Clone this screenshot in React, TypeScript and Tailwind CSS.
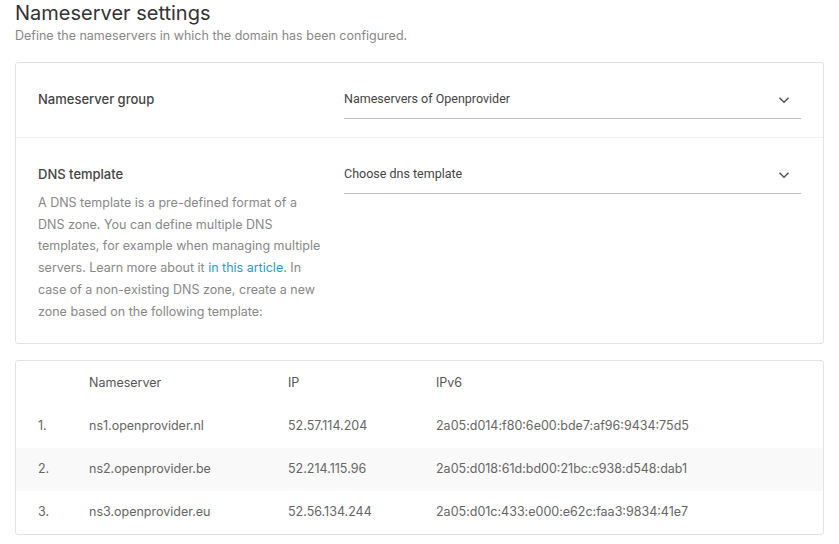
import React from 'react';

const rows = [
  { n: '1.', ns: 'ns1.openprovider.nl', ip: '52.57.114.204', ip6: '2a05:d014:f80:6e00:bde7:af96:9434:75d5' },
  { n: '2.', ns: 'ns2.openprovider.be', ip: '52.214.115.96', ip6: '2a05:d018:61d:bd00:21bc:c938:d548:dab1' },
  { n: '3.', ns: 'ns3.openprovider.eu', ip: '52.56.134.244', ip6: '2a05:d01c:433:e000:e62c:faa3:9834:41e7' },
];

function Chevron() {
  return (
    <svg width="12" height="8" viewBox="0 0 12 8" fill="none" className="mr-[11px]">
      <path d="M1.5 1.8 6 6.2l4.5-4.4" stroke="#555" strokeWidth="1.6" />
    </svg>
  );
}

function Select({ value }: { value: string }) {
  return (
    <div className="flex-1 h-[38px] flex items-center justify-between border-b border-[#bdbdbd] font-['Roboto',sans-serif] text-[12.5px] text-[#444]">
      <span>{value}</span>
      <Chevron />
    </div>
  );
}

export default function App() {
  return (
    <div className="min-h-screen bg-white px-[15px] font-['Inter',sans-serif]">
      <h1 className="text-[20px] leading-[26px] text-[#333] font-normal">Nameserver settings</h1>
      <p className="text-[12.5px] leading-[18px] text-[#888] mt-[1px]">
        Define the nameservers in which the domain has been configured.
      </p>

      <div className="mt-[17px] border border-[#e3e3e3] rounded-[3px]">
        <div className="flex px-[22px] pt-[18px] pb-[18px] border-b border-[#f2f2f2]">
          <div className="w-[306px] h-[38px] flex items-center text-[13px] font-medium text-[#444]">
            Nameserver group
          </div>
          <Select value="Nameservers of Openprovider" />
        </div>
        <div className="flex px-[22px] pt-[18px] pb-[21px]">
          <div className="w-[306px] pr-[21px]">
            <div className="mt-[8px] leading-[20px] text-[13px] font-medium text-[#444]">DNS template</div>
            <p className="mt-[8px] text-[12.5px] leading-[21.7px] text-[#888]">
              A DNS template is a pre-defined format of a DNS zone. You can define multiple DNS templates, for example
              when managing multiple servers. Learn more about it{' '}
              <a className="text-[#2a9ad3]" href="#">in this article</a>. In case of a non-existing DNS zone, create a
              new zone based on the following template:
            </p>
          </div>
          <Select value="Choose dns template" />
        </div>
      </div>

      <div className="mt-[16px] border border-[#e3e3e3] rounded-[3px] text-[12.5px] text-[#666]">
        <div className="flex items-center h-[44px] text-[#555]">
          <div className="w-[73px]" />
          <div className="w-[199px]">Nameserver</div>
          <div className="w-[148px]">IP</div>
          <div>IPv6</div>
        </div>
        {rows.map((r, i) => (
          <div key={r.n} className={`flex items-center h-[43px] ${i === 1 ? 'bg-[#f9f9f9]' : ''}`}>
            <div className="w-[73px] pl-[22px]">{r.n}</div>
            <div className="w-[199px]">{r.ns}</div>
            <div className="w-[148px]">{r.ip}</div>
            <div>{r.ip6}</div>
          </div>
        ))}
      </div>
    </div>
  );
}
